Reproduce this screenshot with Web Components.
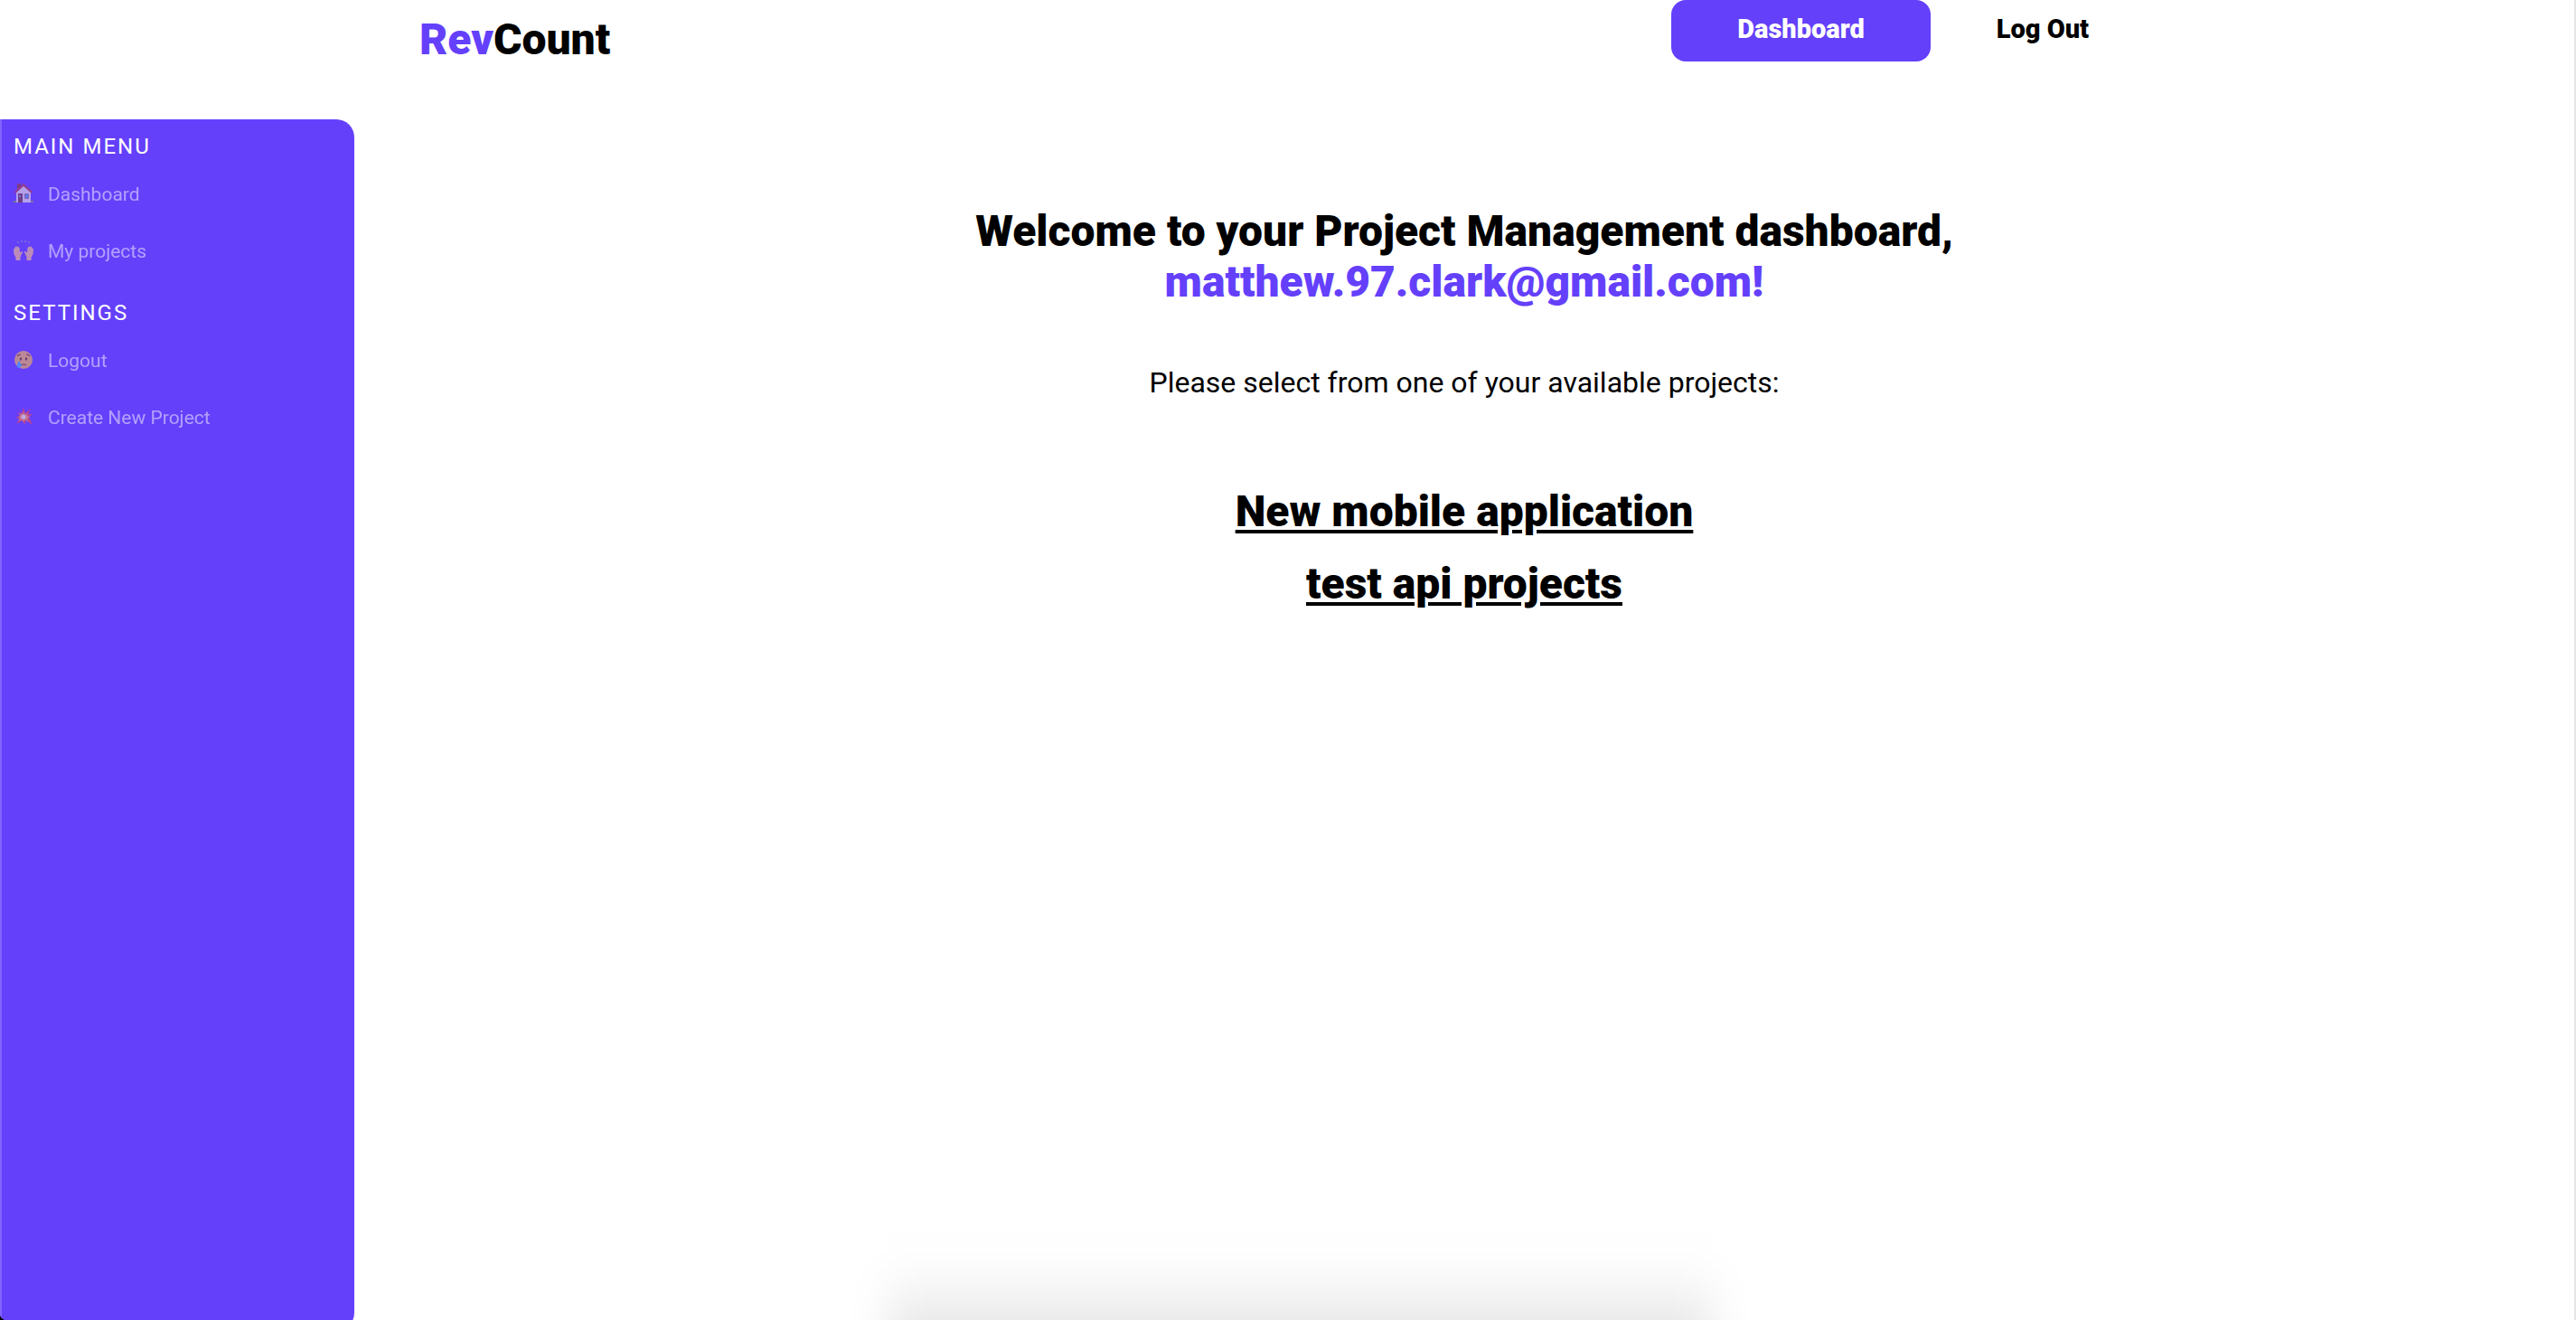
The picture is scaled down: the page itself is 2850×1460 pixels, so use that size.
<!DOCTYPE html>
<html lang="en">
<head>
<meta charset="utf-8">
<title>RevCount</title>
<style>
html { height: 100%; }
body {
  margin: 0; min-height: 100%; box-sizing: border-box; background: #fff; color: #000; overflow: hidden;
  font-family: Roboto, "Liberation Sans", sans-serif;
  --brand: #6440fb;
}
</style>
</head>
<body>
<rev-app>
  <rev-header slot="header"></rev-header>
  <rev-sidebar slot="sidebar">
    <side-section heading="Main menu">
      <side-link icon="house">Dashboard</side-link>
      <side-link icon="hands">My projects</side-link>
    </side-section>
    <side-section heading="Settings">
      <side-link icon="tear">Logout</side-link>
      <side-link icon="boom">Create New Project</side-link>
    </side-section>
  </rev-sidebar>
  <rev-welcome email="matthew.97.clark@gmail.com">
    <project-link>New mobile application</project-link>
    <project-link>test api projects</project-link>
  </rev-welcome>
</rev-app>
<script>
const define = (name, html, setup) => {
  const template = document.createElement('template');
  template.innerHTML = html;
  customElements.define(name, class extends HTMLElement {
    constructor() {
      super();
      this.attachShadow({ mode: 'open' }).append(template.content.cloneNode(true));
    }
    connectedCallback() { if (setup) setup(this, this.shadowRoot); }
  });
};

const hand = '<path d="M2.500 22v-3L0.300 14.500 0 9.500Q.2 8 1.200 9.200L1.700 7Q2.600 6 3.100 7.200L4.200 6.600Q5.200 6.300 5.400 7.500 6.500 7 6.600 8.600L7 13.500 9 12Q10.300 11.500 10 13L7.500 18v4z"/>';
const icons = {
  house: `<path fill="#7b9a5b" d="M0 19h22v2H0z"/><path fill="#8d3a3a" d="M4 0h4v6H4z"/><path fill="#eadfe0" d="M3 9 11 2l8 7v12H3z"/><path fill="#b03a4c" d="M11 0 21 9l-1 2-9-8-9 8-1-2z"/><path fill="#7a3d3d" d="M5 11h5v10H5z"/><circle cx="7" cy="14" r="1" fill="#6fc4ff"/><path fill="#4f9be8" stroke="#9a7a83" d="M12.500 11.500h4v5h-4z"/>`,
  hands: `<g fill="#f7bf8e">${hand}<g transform="translate(22 0) scale(-1 1)">${hand}</g></g><g fill="#8f9cae"><circle cx="5" cy="2" r="1"/><circle cx="9" cy="1" r="1"/><circle cx="13" cy="1" r="1"/><circle cx="17" cy="2" r="1"/></g>`,
  tear: `<circle cx="11" cy="11" r="10" fill="#f7b955"/><path d="M4 7q1-2 4-2M14 5q3 0 4 2M8.500 17q3-2 5.500 0" fill="none" stroke="#6b3e20" stroke-width="1.200"/><ellipse cx="8" cy="10" rx="1.200" ry="1.700" fill="#6b3e20"/><ellipse cx="14" cy="10" rx="1.200" ry="1.700" fill="#6b3e20"/><path fill="#45b4ff" d="M6 12q4 5 2 7-2 2-4 0-1-2 2-7z"/>`,
  boom: `<path fill="#f0404c" d="m6 2 3 5 2-6 2 6 6-5-3 6 5 0-4 3 4 9-7-5-2 5-2-5-7 4 4-6-5-1 5-2-3-4 5 2z"/><path fill="#ffa04d" d="m8 5 2 4 1-4 2 4 3-2-1 3 3 1-3 2 2 4-4-3-2 3-2-3-4 2 2-4-2-1 3-1-2-3 3 1z"/><circle cx="11" cy="11" r="2.500" fill="#fff0d0"/>`
};

define('rev-app', `
<style>
:host { display: flex; flex-direction: column; height: 100vh; overflow: hidden; border-right: 2px solid #e6e6e6; box-sizing: border-box; position: relative; }
.body { display: flex; flex: 1; align-items: flex-start; }
main { flex: 1; }
.shade {
  position: absolute; bottom: 0; left: 33%; right: 32%; height: 110px;
  background: linear-gradient(to top, rgba(0,0,0,.08), rgba(0,0,0,.043) 30px, rgba(0,0,0,.012) 60px, rgba(0,0,0,.004) 80px, transparent);
  mask-image: linear-gradient(to right, transparent, rgba(0,0,0,.15) 22px, rgba(0,0,0,.85) 64px, #000 90px, #000 calc(100% - 90px), rgba(0,0,0,.85) calc(100% - 64px), rgba(0,0,0,.15) calc(100% - 22px), transparent);
}
.corner { position: absolute; left: 0; bottom: 0; width: 8px; height: 8px; background: radial-gradient(circle at 100% 0, transparent 8px, #000 9px); }
</style>
<slot name="header"></slot>
<div class="body"><slot name="sidebar"></slot><main><slot></slot></main></div>
<div class="shade"></div><div class="corner"></div>`);

define('rev-header', `
<style>
:host { display: block; flex: none; height: 132px; }
.bar { display: flex; justify-content: space-between; align-items: flex-start; max-width: 1920px; margin: 0 auto; }
.logo { margin-top: 16px; font-size: 48px; line-height: 56px; font-weight: 900; color: #000; text-decoration: none; }
.logo span { color: var(--brand); }
nav { display: flex; }
nav a { padding: 16px 73px 20px; font-size: 29px; line-height: 32px; font-weight: 900; color: #000; text-decoration: none; }
nav a.on { background: var(--brand); color: #fff; border-radius: 16px; }
</style>
<header class="bar">
  <a class="logo" href="#"><span>Rev</span>Count</a>
  <nav><a class="on" href="#">Dashboard</a><a href="#">Log Out</a></nav>
</header>`);

define('rev-sidebar', `
<style>
:host { display: block; flex: none; width: 392px; height: calc(100vh - 120px); box-sizing: border-box; padding: 16px 13px; background: var(--brand); border-left: 2px solid #8063fc; border-radius: 0 20px 20px 0; }
nav { display: flex; flex-direction: column; gap: 42px; }
</style>
<nav><slot></slot></nav>`);

define('side-section', `
<style>
:host { display: block; }
h2 { margin: 0 0 27px; font-size: 24px; line-height: 28px; font-weight: 400; letter-spacing: 2px; text-transform: uppercase; color: #fff; }
div { display: flex; flex-direction: column; gap: 39px; }
</style>
<h2></h2><div><slot></slot></div>`, (el, root) => {
  root.querySelector('h2').textContent = el.getAttribute('heading');
});

define('side-link', `
<style>
:host { display: block; }
a { display: flex; align-items: flex-start; gap: 16px; font-size: 21px; line-height: 24px; color: #fff; text-decoration: none; }
span { opacity: .5; }
svg { width: 22px; height: 22px; flex: none; opacity: .6; }
</style>
<a href="#"><svg viewBox="0 0 22 22" aria-hidden="true"></svg><span><slot></slot></span></a>`, (el, root) => {
  root.querySelector('svg').innerHTML = icons[el.getAttribute('icon')];
});

define('rev-welcome', `
<style>
:host { display: flex; flex-direction: column; align-items: center; padding-top: 96px; text-align: center; }
h1 { margin: 0; font-size: 48px; line-height: 56px; font-weight: 900; }
h1 span { display: block; color: var(--brand); }
p { margin: 64px 0 0; font-size: 32px; line-height: 38px; }
.list { display: flex; flex-direction: column; align-items: center; gap: 24px; margin-top: 96px; }
</style>
<h1>Welcome to your Project Management dashboard, <span></span></h1>
<p>Please select from one of your available projects:</p>
<div class="list"><slot></slot></div>`, (el, root) => {
  root.querySelector('h1 span').textContent = el.getAttribute('email') + '!';
});

define('project-link', `
<style>
:host { display: block; }
a { font-size: 48px; line-height: 56px; font-weight: 900; color: #000; display: block; text-decoration: underline; text-decoration-thickness: 4px; text-underline-offset: 4px; }
</style>
<a href="#"><slot></slot></a>`);
</script>
</body>
</html>
